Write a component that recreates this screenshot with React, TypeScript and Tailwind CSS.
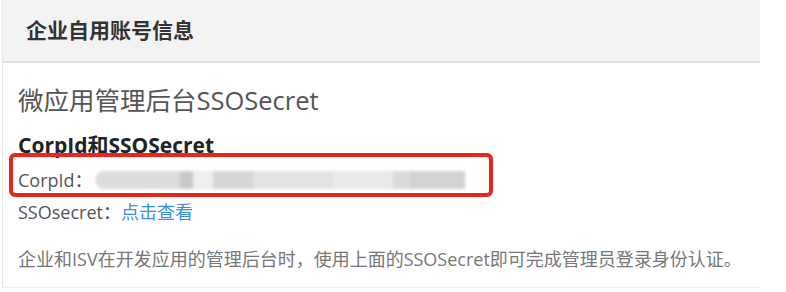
import React from "react";

const blurSegs: { w: number; c: string }[] = [
  { w: 85, c: "#dcdcdc" },
  { w: 13, c: "#c9c9c9" },
  { w: 20, c: "#efefef" },
  { w: 40, c: "#d6d6d6" },
  { w: 80, c: "#e3e3e3" },
  { w: 60, c: "#eaeaea" },
  { w: 17, c: "#dadada" },
  { w: 55, c: "#d2d2d2" },
];

export default function App() {
  return (
    <div className="relative w-[786px] h-[292px] bg-white overflow-hidden font-['Open_Sans','Noto_Sans_CJK_SC',sans-serif]">
      <div className="ml-[2px] w-[758px] border-l border-[#e6e6e6] border-b border-b-[#eef0f3]">
        <div className="h-[63px] bg-[#f3f3f3] border-b-2 border-[#dcdcdc] flex items-center pl-[23px]">
          <span className="text-[21px] font-bold text-[#333] leading-none">企业自用账号信息</span>
        </div>
        <div className="pl-[15px] pt-[19px] pb-[13px]">
          <div className="text-[25.5px] leading-[36px] text-[#555]">微应用管理后台SSOSecret</div>
          <div className="mt-[13px] text-[21px] leading-[28px] font-bold text-[#222]">CorpId和SSOSecret</div>
          <div className="mt-[6px] flex items-center text-[18px] leading-[30px] text-[#555]">
            <span>CorpId：</span>
            <span className="inline-flex h-[18px] ml-[2px] blur-[1.5px]">
              {blurSegs.map((s, i) => (
                <span
                  key={i}
                  className={i === 0 ? "h-full rounded-l-full" : "h-full"}
                  style={{ width: s.w, backgroundColor: s.c }}
                />
              ))}
            </span>
          </div>
          <div className="mt-[2px] text-[18px] leading-[30px] text-[#555]">
            SSOsecret：<span className="text-[#3a8ee6]">点击查看</span>
          </div>
          <div className="mt-[17px] text-[18px] leading-[30px] text-[#777]">
            企业和ISV在开发应用的管理后台时，使用上面的SSOSecret即可完成管理员登录身份认证。
          </div>
        </div>
      </div>
      <div className="absolute left-[9px] top-[153px] w-[484px] h-[44px] border-[4px] border-[#e8261e] rounded-[6px]" />
    </div>
  );
}
